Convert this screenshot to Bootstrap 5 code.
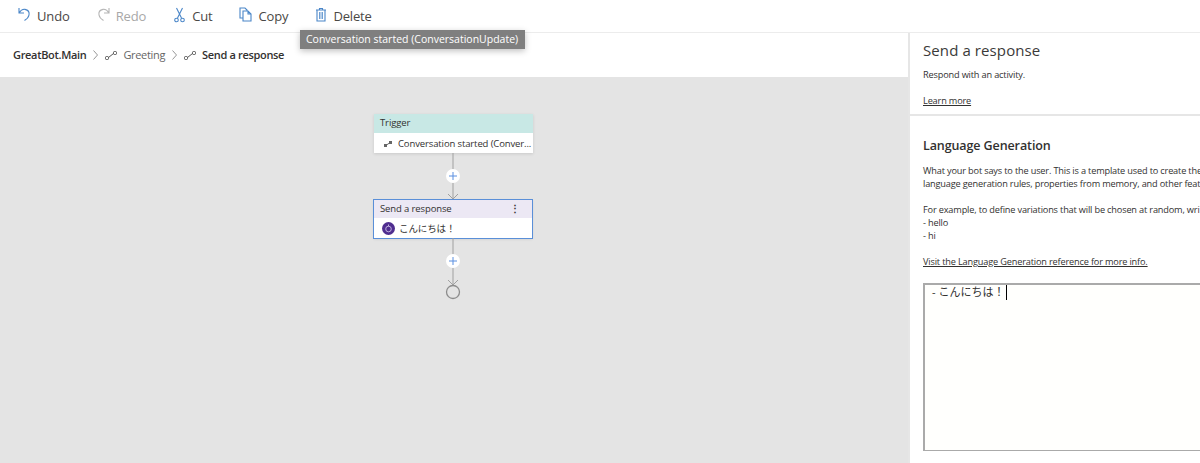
<!DOCTYPE html>
<html lang="en">
<head>
    <meta charset="UTF-8">
    <title>GreatBot.Main - Send a response</title>
    <link href="https://cdn.jsdelivr.net/npm/bootstrap@5.3.0/dist/css/bootstrap.min.css" rel="stylesheet">
    <style>
        html, body { height: 463px; overflow: hidden; }
        body { font-family: "Open Sans", "Noto Sans CJK JP", sans-serif; color: #323130; background: #fff; }
        .tool-bar { height: 33px; border-bottom: 1px solid #ececec; padding-left: 18px; }
        .tool-item { font-size: 13px; color: #4a4846; letter-spacing: -.15px; line-height: 32px; gap: 6px; margin-right: 27px; }
        .tool-item.is-off { color: #a8a8a8; }
        .tool-item svg { display: block; margin-top: -3px; flex: none; }
        .work-area { height: 430px; }
        .left-pane { width: 908px; }
        .crumb-bar { height: 44px; padding-left: 13px; font-size: 11px; letter-spacing: -.33px; }
        .crumb-bar strong { font-weight: 600; color: #323130; }
        .crumb-light { color: #666; margin-left: 6px; }
        .crumb-sep { margin: 0 7px; flex: none; }
        .crumb-last { margin-left: 6px; }
        .flow-canvas { height: 386px; background: #e4e4e4; padding: 37px 2px 0 0; }
        .flow-node { width: 159px; background: #fff; font-size: 9.5px; letter-spacing: -.12px; box-shadow: 0 1px 3px rgba(0,0,0,.12); }
        .node-trigger { margin-left: 1px; }
        .node-head { height: 19px; line-height: 18px; padding-left: 6px; }
        .head-trigger { background: #c8e8e5; }
        .head-send { background: #ece8f4; height: 18px; padding-left: 6px; line-height: 17px; }
        .node-kebab { margin-right: 12px; font-weight: 700; }
        .node-body { height: 20px; line-height: 20px; padding-top: 1px; white-space: nowrap; overflow: hidden; }
        .node-selected { width: 158px; height: 38px; outline: 1px solid #5a8fd8; }
        .node-icon { flex: none; margin: 0 6px 0 10px; }
        .bot-dot { width: 13px; height: 13px; border-radius: 50%; background: #4f2d8f; flex: none; margin: 0 4px 0 8px; }
        .flow-link { display: block; flex: none; }
        .flow-end { margin-top: -7px; }
        .side-pane { width: 292px; border-left: 2px solid #e6e6e6; }
        .side-head { height: 83px; padding: 6px 0 0 13px; border-bottom: 2px solid #e6e6e6; }
        .side-title { font-size: 15px; font-weight: 400; line-height: 22px; margin: 0 0 7px; letter-spacing: .1px; color: #3b3a39; }
        .side-text { font-size: 9.2px; line-height: 13px; white-space: nowrap; color: #323130; letter-spacing: -.17px; }
        .side-link { color: #323130; text-decoration: underline; }
        .side-gap { margin-top: 13px; }
        .side-body { padding: 21px 0 0 13px; }
        .lg-title { font-size: 12.500px; font-weight: 600; line-height: 18px; margin: 0 0 9px; letter-spacing: -.1px; }
        .lg-editor { width: 277px; height: 168px; margin-top: 15px; border: 1px solid #aaa; border-right: 0; border-left-width: 2px; border-top-width: 2px; padding: 0 0 0 7px; font-size: 11px; line-height: 14px; background: #fffffd; }
        .lg-caret { display: inline-block; width: 1px; height: 15px; margin-left: 2px; background: #000; vertical-align: top; }
        .hover-tip { position: absolute; left: 300px; top: 30px; width: 225px; height: 19px; background: #7f7f7f; color: #fff; font-size: 10.5px; line-height: 19px; padding-left: 6px; white-space: nowrap; box-shadow: 0 2px 6px rgba(0,0,0,.25); }
    </style>
</head>
<body>
    <!-- Top toolbar -->
    <div class="tool-bar d-flex align-items-center">
        <div class="tool-item d-flex align-items-center">
            <svg width="13" height="16" viewBox="0 0 13 16" fill="none" stroke="#4a86c8" stroke-width="1.1"><path d="M1 1v5h5M1 6c2-3 4-4 6-3.600 3 .6 4.500 3 4 5.600-.4 2-2 4-4.500 5.500"/></svg>
            <span>Undo</span>
        </div>
        <div class="tool-item is-off d-flex align-items-center">
            <svg width="13" height="16" viewBox="0 0 13 16" fill="none" stroke="#b5b5b5" stroke-width="1.1"><path d="M12 1v5H7M12 6c-2-3-4-4-6-3.600-3 .6-4.500 3-4 5.600.4 2 2 4 4.500 5.500"/></svg>
            <span>Redo</span>
        </div>
        <div class="tool-item d-flex align-items-center">
            <svg width="13" height="16" viewBox="0 0 13 16" fill="none" stroke="#4a86c8" stroke-width="1.1"><path d="M3.500 1l5 10M9.500 1l-5 10"/><circle cx="3.500" cy="13" r="1.800"/><circle cx="9.500" cy="13" r="1.800"/></svg>
            <span>Cut</span>
        </div>
        <div class="tool-item d-flex align-items-center">
            <svg width="13" height="16" viewBox="0 0 13 16" fill="none" stroke="#4a86c8" stroke-width="1.1"><path d="M4 11H1V1h5l2 2v1"/><path d="M4 4h5l3 3v7H4zM9 4v3h3"/></svg>
            <span>Copy</span>
        </div>
        <div class="tool-item d-flex align-items-center">
            <svg width="12" height="16" viewBox="0 0 12 16" fill="none" stroke="#4a86c8" stroke-width="1.1"><path d="M1 3h10M4.500 3V1.500h3V3M2 3v11h8V3"/><path d="M4.500 5v7M6 5v7M7.500 5v7" stroke-width=".8"/></svg>
            <span>Delete</span>
        </div>
    </div>

    <div class="hover-tip">Conversation started (ConversationUpdate)</div>

    <div class="work-area d-flex">
        <div class="left-pane d-flex flex-column">
            <!-- Breadcrumb -->
            <div class="crumb-bar d-flex align-items-center">
                <strong>GreatBot.Main</strong>
                <svg class="crumb-sep" width="5" height="10" viewBox="0 0 5 10" fill="none" stroke="#8a8a8a" stroke-width=".9"><path d="M.5.5 4.500 5 .5 9.500"/></svg>
                <svg width="12" height="9" viewBox="0 0 12 9" fill="none" stroke="#444" stroke-width=".9"><rect x=".5" y="5.500" width="3" height="3" rx="1"/><rect x="8.500" y=".5" width="3" height="3" rx="1"/><path d="M3.500 6.500 8.500 2.500"/></svg>
                <span class="crumb-light">Greeting</span>
                <svg class="crumb-sep" width="5" height="10" viewBox="0 0 5 10" fill="none" stroke="#8a8a8a" stroke-width=".9"><path d="M.5.5 4.500 5 .5 9.500"/></svg>
                <svg width="12" height="9" viewBox="0 0 12 9" fill="none" stroke="#444" stroke-width=".9"><rect x=".5" y="5.500" width="3" height="3" rx="1"/><rect x="8.500" y=".5" width="3" height="3" rx="1"/><path d="M3.500 6.500 8.500 2.500"/></svg>
                <strong class="crumb-last">Send a response</strong>
            </div>

            <!-- Flow diagram -->
            <div class="flow-canvas d-flex flex-column align-items-center">
                <div class="flow-node node-trigger">
                    <div class="node-head head-trigger">Trigger</div>
                    <div class="node-body d-flex align-items-center">
                        <svg class="node-icon" width="8" height="6" viewBox="0 0 8 6" fill="none" stroke="#666" stroke-width="1"><path d="M1 5 7 1"/><rect x=".5" y="3.500" width="2" height="2" fill="#666"/><rect x="5.500" y=".5" width="2" height="2" fill="#666"/></svg>
                        <span>Conversation started (Conver...</span>
                    </div>
                </div>
                <svg class="flow-link" width="20" height="47" viewBox="0 0 20 47" fill="none">
                    <path d="M10 0v46M5 41l5 5 5-5" stroke="#a0a0a0"/>
                    <circle cx="10" cy="23" r="7" fill="#fff"/>
                    <path d="M6 23h8M10 19v8" stroke="#5b8fe0"/>
                </svg>
                <div class="flow-node node-selected">
                    <div class="node-head head-send d-flex justify-content-between">
                        <span>Send a response</span>
                        <span class="node-kebab">⋮</span>
                    </div>
                    <div class="node-body d-flex align-items-center">
                        <span class="bot-dot d-flex align-items-center justify-content-center">
                            <svg width="9" height="9" viewBox="0 0 9 9" fill="none" stroke="#d8cdf0" stroke-width=".8"><circle cx="4.500" cy="5" r="2.800"/><path d="M4.500 .5v1.700"/></svg>
                        </span>
                        <span>こんにちは！</span>
                    </div>
                </div>
                <svg class="flow-link" width="20" height="53" viewBox="0 0 20 53" fill="none">
                    <path d="M10 0v47M5 42l5 5 5-5" stroke="#a0a0a0"/>
                    <circle cx="10" cy="23" r="7" fill="#fff"/>
                    <path d="M6 23h8M10 19v8" stroke="#5b8fe0"/>
                </svg>
                <svg class="flow-link flow-end" width="16" height="16" viewBox="0 0 16 16" fill="none">
                    <circle cx="8" cy="8" r="6.500" stroke="#8c8c8c" stroke-width="1.300"/>
                </svg>
            </div>
        </div>

        <!-- Property panel -->
        <div class="side-pane">
            <div class="side-head">
                <h2 class="side-title">Send a response</h2>
                <div class="side-text">Respond with an activity.</div>
                <div class="side-text side-gap"><a class="side-link" href="#">Learn more</a></div>
            </div>
            <div class="side-body">
                <h3 class="lg-title">Language Generation</h3>
                <div class="side-text">What your bot says to the user. This is a template used to create the</div>
                <div class="side-text">language generation rules, properties from memory, and other feat</div>
                <div class="side-text side-gap">For example, to define variations that will be chosen at random, wri</div>
                <div class="side-text">- hello</div>
                <div class="side-text">- hi</div>
                <div class="side-text side-gap"><a class="side-link" href="#">Visit the Language Generation reference for more info.</a></div>
                <div class="lg-editor">- こんにちは！<span class="lg-caret"></span></div>
            </div>
        </div>
    </div>

    <script src="https://cdn.jsdelivr.net/npm/bootstrap@5.3.0/dist/js/bootstrap.bundle.min.js"></script>
</body>
</html>
